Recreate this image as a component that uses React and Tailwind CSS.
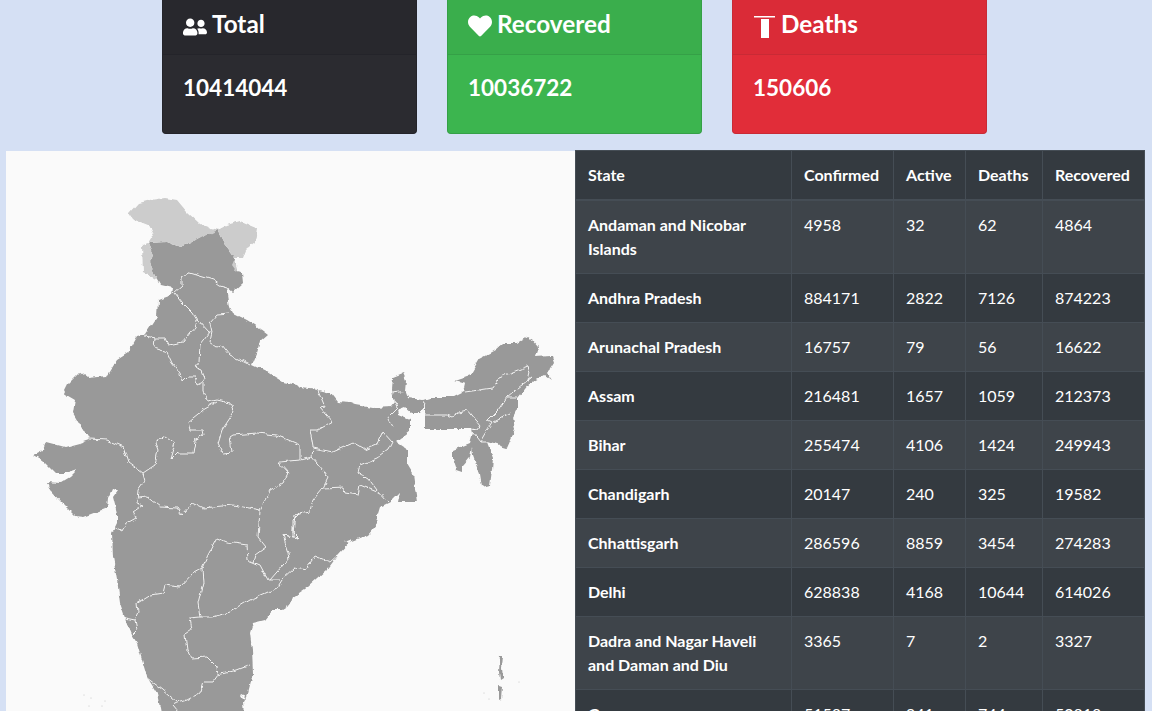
import React from "react";
import { FaHeart, FaUserFriends } from "react-icons/fa";

const rows = [
  ["Andaman and Nicobar Islands", 4958, 32, 62, 4864],
  ["Andhra Pradesh", 884171, 2822, 7126, 874223],
  ["Arunachal Pradesh", 16757, 79, 56, 16622],
  ["Assam", 216481, 1657, 1059, 212373],
  ["Bihar", 255474, 4106, 1424, 249943],
  ["Chandigarh", 20147, 240, 325, 19582],
  ["Chhattisgarh", 286596, 8859, 3454, 274283],
  ["Delhi", 628838, 4168, 10644, 614026],
  ["Dadra and Nagar Haveli and Daman and Diu", 3365, 7, 2, 3327],
  ["Goa", 51587, 941, 744, 50818],
];

const mainland =
  "148,243 167,242 180,247 197,240 210,232 218,230 227,247 235,258 237,272 242,273 243,283 233,292 227,287 230,307 233,313 247,320 255,325 268,335 260,342 257,353 252,365 267,372 283,382 297,385 300,388 318,390 330,393 337,402 350,403 355,405 373,408 392,407 395,403 392,390 393,377 403,373 406,380 405,390 408,398 423,400 433,397 453,397 463,392 465,383 455,380 470,375 480,358 495,350 503,343 517,343 527,337 532,340 538,347 535,357 552,356 554,362 547,373 552,380 545,375 530,383 518,398 518,407 513,417 515,430 507,448 487,442 493,458 492,470 490,485 482,487 480,475 473,455 472,447 470,457 463,465 463,472 457,470 453,458 453,450 470,443 473,433 472,429 425,429 425,405 420,413 412,413 405,407 397,410 398,415 410,420 410,430 395,442 407,450 407,463 413,473 415,488 417,502 407,502 398,502 400,492 390,502 380,507 377,517 379,522 368,535 350,542 338,555 327,570 308,587 293,597 290,605 282,610 273,610 265,620 253,623 250,633 252,650 253,673 248,693 243,703 245,725 163,725 157,693 147,677 142,660 137,643 132,635 125,618 120,603 117,580 113,557 112,533 117,523 117,513 113,497 118,490 112,489 108,498 107,508 83,517 75,516 62,503 50,490 47,482 60,483 70,477 77,470 68,473 55,473 42,460 33,455 43,450 46,442 65,447 80,443 89,440 83,430 73,413 75,400 63,393 67,385 80,372 88,378 107,376 117,360 128,353 137,337 145,335 157,317 158,300 172,295 173,288 160,285 157,280 150,263 153,255";

const disputed = [
  "129,213 138,203 150,200 165,198 177,200 187,212 200,224 210,228 218,230 197,240 180,247 167,242 148,243 153,235 148,225 133,219",
  "218,230 227,225 240,221 257,228 255,242 245,250 242,258 235,258 227,247",
  "148,243 142,245 143,273 157,280 150,263 153,255",
  "235,258 232,265 237,272",
];

const borders = [
  "173,293 182,285 182,278 190,273 200,276 213,280 220,285 227,287",
  "175,293 182,302 192,312 197,320 208,332 210,332",
  "230,314 217,315 210,323 212,332 210,342 217,347 222,345 230,355 250,365",
  "144,336 155,338 154,348 167,352 172,363 180,373 182,382 187,377 195,377 197,385 203,382 203,392 208,402 217,400 230,403 234,412 230,418 222,430 218,443 223,453 232,452 230,437 233,435 257,433 277,435 300,445 300,460 280,462 278,462 288,473 283,483 270,490 260,510",
  "155,338 165,338 168,345 183,342 190,333 195,327 197,320",
  "210,332 200,345 199,362 195,367 202,370 205,378 203,382",
  "217,402 203,410 188,422 190,430 202,430 203,435 195,440 193,453 177,453 170,460 175,443 165,436 155,442 158,450 155,465 143,473",
  "89,439 107,440 123,447 128,462 143,473 145,480 138,490 137,503 143,505 133,512 136,518 127,523 122,532 115,528",
  "138,498 147,497 160,507 177,508 182,515 193,503 203,508 233,505 260,510 258,537 266,547 255,555 253,562 260,565 268,580 280,580",
  "202,568 208,555 217,538 227,542 247,545 248,560 253,562",
  "202,568 193,573 180,587 165,585 163,593 150,595 137,603 138,613 135,620 125,618",
  "135,620 137,630 132,635",
  "202,568 203,583 198,603 200,617 213,617 230,612 250,600 277,588 282,580 295,568 305,570 315,556 330,562 338,555",
  "200,617 190,618 192,630 185,635 187,650 192,658 207,657 217,667 218,675 213,682 203,682 200,693 187,700 177,703 173,705 178,711",
  "218,675 237,670 250,665",
  "147,678 163,690 177,702",
  "300,513 293,520 293,537 283,535 290,557 270,580",
  "318,390 325,407 320,408 332,422 318,430 310,430 313,447 312,457 300,460",
  "313,448 333,452 353,443 365,450 377,445 383,432 392,442 388,450 377,458 360,465 358,472 368,478 377,490 388,502",
  "312,457 323,470 328,478 323,488 343,487 345,493 358,495 360,485 377,492",
  "323,488 313,500 310,512 295,515 293,533 298,538 283,535",
  "395,403 397,408 388,417 393,427",
  "393,393 407,391",
  "425,402 423,413",
  "465,392 493,388 500,377 528,366 530,372 528,380 532,377 513,392 507,397 498,410 488,420 492,422 487,430 480,442",
  "507,397 518,397",
  "510,413 493,422",
  "425,415 447,415 452,417 460,412 468,410 480,425 477,430 472,429",
  "473,433 480,442 487,442",
];

function IndiaMap() {
  return (
    <svg viewBox="6 151 569 560" className="block h-[560px] w-[569px]">
      <defs>
        <filter id="rough" x="6" y="151" width="569" height="560" filterUnits="userSpaceOnUse" primitiveUnits="userSpaceOnUse">
          <feTurbulence type="fractalNoise" baseFrequency="0.12" numOctaves="3" seed="4" result="n" />
          <feDisplacementMap in="SourceGraphic" in2="n" scale="5" xChannelSelector="R" yChannelSelector="G" />
          <feGaussianBlur stdDeviation="0.3" />
        </filter>
      </defs>
      <g filter="url(#rough)">
        <polygon points={mainland} fill="#999999" />
        {disputed.map((d, i) => (
          <polygon key={i} points={d} fill="#cccccc" />
        ))}
        {borders.map((b, i) => (
          <polyline key={i} points={b} fill="none" stroke="#f2f2f2" strokeWidth="1" strokeLinejoin="round" />
        ))}
        <polygon points="345,542 352,539 349,544" fill="#fafafa" />
        <polygon points="241,696 245,694 244,701" fill="#fafafa" />
        <polygon points="500,655 503,655 502,668 503,678 500,680 499,672" fill="#999999" />
        <polygon points="499,685 502,686 501,699 499,700" fill="#999999" />
      </g>
      {[[84,695],[91,698],[89,706],[102,706],[105,701],[519,682],[484,693],[489,699]].map(([x, y], i) => (
        <circle key={i} cx={x} cy={y} r="0.5" fill="#bbbbbb" />
      ))}
    </svg>
  );
}

function DeathIcon() {
  return (
    <svg viewBox="0 0 23 22" className="mt-[5px] h-[22px] w-[23px]" fill="#ffffff">
      <rect x="1" y="0" width="21" height="1.5" />
      <rect x="8" y="3" width="8" height="19" />
    </svg>
  );
}

function StatCard({ title, value, icon, body, head, line }) {
  return (
    <div className={`w-[255px] overflow-hidden rounded-b-[4px] border border-t-0 ${body} ${line}`}>
      <div className={`flex h-[55px] items-center gap-[5px] border-b pb-[6px] pl-[20px] ${head} ${line}`}>
        {icon}
        <span className="text-[24.3px] font-bold text-white">{title}</span>
      </div>
      <div className="h-[78px] pl-[20px] pt-[14px] text-[22.5px] leading-[38px] font-bold text-white">{value}</div>
    </div>
  );
}

export default function App() {
  return (
    <div className="h-[711px] overflow-hidden bg-[#d5e0f4] [font-family:Lato,sans-serif]">
      <div className="flex gap-[30px] pl-[162px]">
        <StatCard
          title="Total"
          value="10414044"
          icon={<FaUserFriends className="mt-[5px] text-[24px] text-white" />}
          body="bg-[#2b2b30]"
          head="bg-[#28282d]"
          line="border-[#24242a]"
        />
        <StatCard
          title="Recovered"
          value="10036722"
          icon={<FaHeart className="mt-[4px] text-[24px] text-white" />}
          body="bg-[#3cb54f]"
          head="bg-[#3aae4c]"
          line="border-[#35a047]"
        />
        <StatCard
          title="Deaths"
          value="150606"
          icon={<DeathIcon />}
          body="bg-[#e12d39]"
          head="bg-[#da2b37]"
          line="border-[#c92a35]"
        />
      </div>
      <div className="mt-[16px] flex items-start pl-[6px]">
        <div className="mt-[1px] w-[569px] bg-[#fafafa]">
          <IndiaMap />
        </div>
        <table className="w-[569px] table-fixed border-collapse bg-[#343a40] text-[16px] leading-[24px] text-white">
          <colgroup>
            <col className="w-[216px]" />
            <col className="w-[102px]" />
            <col className="w-[72px]" />
            <col className="w-[77px]" />
            <col className="w-[102px]" />
          </colgroup>
          <thead>
            <tr>
              {["State", "Confirmed", "Active", "Deaths", "Recovered"].map((h) => (
                <th key={h} className="border border-b-2 border-[#454d55] p-[12px] text-left font-bold">
                  {h}
                </th>
              ))}
            </tr>
          </thead>
          <tbody>
            {rows.map((r, i) => (
              <tr key={r[0]} className={i % 2 === 0 ? "bg-[#3e444a]" : ""}>
                <th className="border border-[#454d55] p-[12px] text-left align-top font-bold">{r[0]}</th>
                {r.slice(1).map((v, j) => (
                  <td key={j} className="border border-[#454d55] p-[12px] align-top">
                    {v}
                  </td>
                ))}
              </tr>
            ))}
          </tbody>
        </table>
      </div>
    </div>
  );
}
